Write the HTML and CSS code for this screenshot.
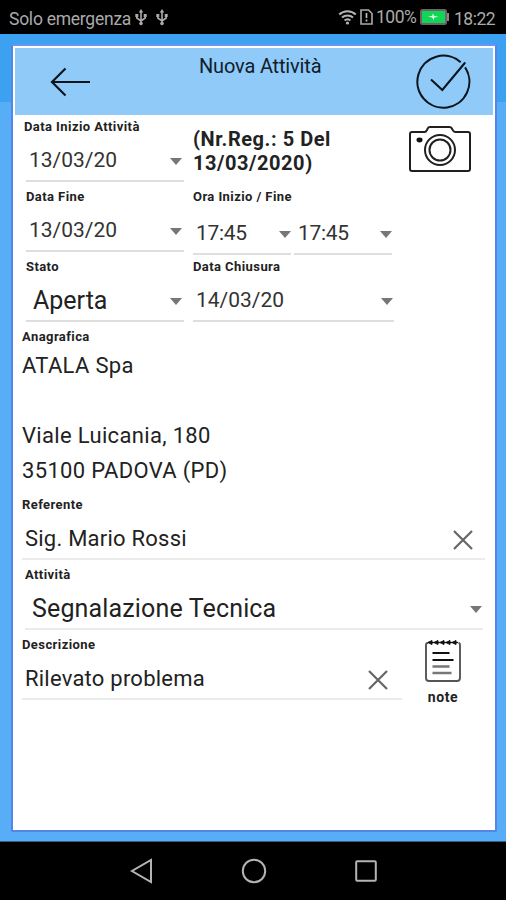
FILE: index.html
```html
<!DOCTYPE html>
<html lang="it">
<head>
<meta charset="utf-8">
<title>Nuova Attività</title>
<link rel="stylesheet" href="styles.css">
</head>
<body>
<div class="status">
  <span class="carrier">Solo emergenza</span>
  <svg class="usb" width="12" height="17" viewBox="0 0 12 17"><path d="M6 2v13M1.800 6v3L6 12l4.200-3V6" fill="none" stroke="#aaa" stroke-width="1.600"/><path d="M6 0l2.300 3.500H3.700zM.3 5h3v3h-3zM8.700 5h3v3h-3z" fill="#aaa"/><circle cx="6" cy="14.500" r="1.800" fill="#aaa"/></svg>
  <svg class="usb usb-second" width="12" height="17" viewBox="0 0 12 17"><path d="M6 2v13M1.800 6v3L6 12l4.200-3V6" fill="none" stroke="#aaa" stroke-width="1.600"/><path d="M6 0l2.300 3.500H3.700zM.3 5h3v3h-3zM8.700 5h3v3h-3z" fill="#aaa"/><circle cx="6" cy="14.500" r="1.800" fill="#aaa"/></svg>
  <svg class="wifi" width="19" height="16" viewBox="0 0 19 16"><path d="M1.200 5.500a12 12 0 0 1 16.600 0M4 8.600a8 8 0 0 1 11 0M6.600 11.500a4.300 4.300 0 0 1 5.800 0" fill="none" stroke="#b4b4b4" stroke-width="2"/><circle cx="9.500" cy="14" r="1.600" fill="#b4b4b4"/></svg>
  <svg class="sim" width="13" height="16" viewBox="0 0 13 16"><path d="M1 1h7.500L12 4.500V15H1z" fill="none" stroke="#aaa" stroke-width="1.600"/><path d="M6.500 4v5M6.500 10.500v2" stroke="#bbb" stroke-width="1.700"/></svg>
  <span class="percent">100%</span>
  <svg class="battery" width="29" height="16" viewBox="0 0 29 16"><rect x="1" y="1" width="25" height="14" rx="1.500" fill="#12d457" stroke="#6c6467" stroke-width="2"/><rect x="27" y="4" width="2" height="8" fill="#888"/><path d="M8 7.500l4.500-.8V4.500l2 2.500 4 .8-4.500.9V11l-2-2.500z" fill="#d9ffe3"/></svg>
  <span class="clock">18:22</span>
</div>
<main>
  <section class="card">
    <header>
      <svg class="back" width="42" height="30" viewBox="0 0 42 30"><path d="M40 15H2M15.500 1.500L2 15l13.500 13.500" fill="none" stroke="#0b151d" stroke-width="2.200"/></svg>
      <h1>Nuova Attività</h1>
      <svg class="confirm" width="56" height="56" viewBox="0 0 56 56"><path d="M44.700 8.300A26 26 0 1 0 49.100 13.400" fill="none" stroke="#0b151d" stroke-width="2.100"/><path d="M15 25.500l11.300 10.500L49.200 8.500" fill="none" stroke="#0b151d" stroke-width="2.100"/></svg>
    </header>
    <div class="body">
      <div class="row">
        <div class="field first start"><label>Data Inizio Attività</label><div class="value date">13/03/20<i class="arrow"></i></div></div>
        <p class="reg">(Nr.Reg.: 5 Del<br>13/03/2020)</p>
        <svg class="camera" width="62" height="46" viewBox="0 0 62 46"><path d="M3 6h12.500q1.500 0 2.500-2l.7-1.500Q19.200 1 21 1h19.500q1.500 0 2.200 1.200L44 4.500Q45 6 46.500 6H59q2 0 2 2v35q0 2-2 2H3q-2 0-2-2V8q0-2 2-2z" fill="none" stroke="#202020" stroke-width="2"/><circle cx="31" cy="24" r="15" fill="none" stroke="#202020" stroke-width="2"/><circle cx="31" cy="24" r="10.500" fill="none" stroke="#202020" stroke-width="2"/><ellipse cx="10.500" cy="14" rx="3" ry="2.400" fill="#111"/></svg>
      </div>
      <div class="row">
        <div class="field first"><label>Data Fine</label><div class="value date">13/03/20<i class="arrow"></i></div></div>
        <div class="field second"><label>Ora Inizio / Fine</label>
          <div class="times"><div class="value time">17:45<i class="arrow"></i></div><div class="value time">17:45<i class="arrow"></i></div></div>
        </div>
      </div>
      <div class="row">
        <div class="field first"><label>Stato</label><div class="value big">Aperta<i class="arrow"></i></div></div>
        <div class="field second"><label>Data Chiusura</label><div class="value date">14/03/20<i class="arrow"></i></div></div>
      </div>
      <div class="address">
        <label>Anagrafica</label>
        <p class="company">ATALA Spa</p>
        <p class="street">Viale Luicania, 180</p>
        <p>35100 PADOVA (PD)</p>
      </div>
      <div class="row">
        <div class="field contact"><label>Referente</label><div class="value text">Sig. Mario Rossi<svg class="clear" width="20" height="20" viewBox="0 0 20 20"><path d="M1 1l18 18M19 1L1 19" stroke="#666" stroke-width="2.200"/></svg></div></div>
      </div>
      <div class="row">
        <div class="field activity"><label>Attività</label><div class="value big">Segnalazione Tecnica<i class="arrow"></i></div></div>
      </div>
      <div class="row">
        <div class="field description"><label>Descrizione</label><div class="value text">Rilevato problema<svg class="clear" width="20" height="20" viewBox="0 0 20 20"><path d="M1 1l18 18M19 1L1 19" stroke="#666" stroke-width="2.200"/></svg></div></div>
        <div class="note">
          <svg width="36" height="44" viewBox="0 0 36 44"><path d="M3 4H2.500Q1 4 1 6v33q0 3 3 3h28q3 0 3-3V6q0-2-1.500-2" fill="none" stroke="#555" stroke-width="1.900"/><path d="M3 3.500h30" stroke="#111" stroke-width="1.300"/><path d="M3 3.500l4-2v4zM9 3.500l4-2v4zM15 3.500l4-2v4zM21 3.500l4-2v4zM27 3.500l4-2v4z" fill="#111" stroke="#111"/><path d="M7.500 14h17M7.500 21h21" stroke="#111" stroke-width="2.200"/><path d="M7.500 27.500h17M7.500 34h19" stroke="#777" stroke-width="2.400"/></svg>
          <span>note</span>
        </div>
      </div>
    </div>
  </section>
</main>
<nav>
  <svg width="23" height="26" viewBox="0 0 23 26"><path d="M21 2v22L2 13z" fill="none" stroke="#b4b4b4" stroke-width="2"/></svg>
  <svg width="26" height="26" viewBox="0 0 26 26"><circle cx="13" cy="13" r="11.200" fill="none" stroke="#b4b4b4" stroke-width="2"/></svg>
  <svg width="22" height="22" viewBox="0 0 22 22"><rect x="1.200" y="1.200" width="19.600" height="19.600" rx="1" fill="none" stroke="#b4b4b4" stroke-width="2"/></svg>
</nav>
</body>
</html>
```
FILE: styles.css
```css
* { box-sizing: border-box; }
body { margin: 0; width: 506px; height: 900px; overflow: hidden; display: flex; flex-direction: column; font-family: Roboto, sans-serif; color: #222; }
p, h1 { margin: 0; font-weight: 400; }
svg { display: block; flex: none; }

.status { height: 34px; background: #000; display: flex; align-items: center; color: #aaa; padding-left: 9px; white-space: nowrap; }
.carrier { width: 126px; font-size: 17.5px; letter-spacing: -0.25px; padding-top: 3px; }
.usb-second { margin-left: 9px; }
.wifi { margin-left: 170px; }
.sim { margin-left: 3px; }
.percent { margin-left: 3px; width: 43px; font-size: 17.5px; letter-spacing: -0.5px; }
.battery { margin-left: 1px; }
.clock { margin-left: 5px; font-size: 17.5px; letter-spacing: -0.5px; padding-top: 3px; }

main { height: 808px; padding: 10px 9px 10px 11px; background: linear-gradient(#3ca1f0 0 68px, #58adf7 68px); border-bottom: 1px solid #315f88; }
.card { height: 788px; background: #fff; border: 2px solid #5585e6; border-top-color: #6c96ee; border-radius: 2px; padding: 2px; }
header { height: 67px; background: #90caf9; display: flex; width: 478px; }
.back { margin: 19px 0 0 35px; }
h1 { margin: 6px 0 0 107px; width: 217px; font-size: 20px; line-height: 24px; letter-spacing: -0.17px; color: #10202b; white-space: nowrap; }
.confirm { margin-top: 6px; }

.body { padding: 4px 0 0 7px; }
.row { display: flex; height: 70px; }
label { display: block; height: 18px; line-height: 15px; font-size: 13px; font-weight: 700; letter-spacing: 0.42px; color: #222; white-space: nowrap; }
.value { display: flex; align-items: center; justify-content: space-between; height: 45px; padding-top: 3px; border-bottom: 2px solid #dedede; white-space: nowrap; }
.arrow { width: 0; height: 0; border: 6.5px solid transparent; border-top: 7px solid #777; border-bottom: 0; margin: 3px 1px 0 0; }
.date { font-size: 21px; padding-left: 3px; color: #333; }
.text { font-size: 22px; padding-left: 3px; letter-spacing: 0.23px; }
.big { font-size: 25px; padding-left: 7px; }
.time { width: 98px; height: 48px; padding-top: 5px; font-size: 21px; letter-spacing: -0.3px; padding-left: 3px; color: #333; }
.time + .time { padding-left: 4px; }
.time .arrow { margin-right: 0; }
.first { width: 158px; margin-left: 4px; margin-right: 9px; }
.first .arrow { margin-right: 2px; }
.start label { margin-left: -2px; }
.second { width: 201px; }
.times { display: flex; gap: 3px; }
.reg { width: 216px; padding-top: 8px; font-size: 20px; line-height: 24px; font-weight: 700; letter-spacing: 0.55px; }
.camera { margin-top: 7px; }
.address { height: 168px; }
.address p { font-size: 22px; height: 35px; line-height: 35px; letter-spacing: 0.33px; white-space: nowrap; }
.address .company { padding-top: 1px; }
.address .street { margin-top: 36px; }
.contact { width: 463px; }
.activity { width: 458px; margin-left: 3px; }
.activity .value { letter-spacing: 0.15px; }
.description { width: 380px; }
.text, .activity .value { border-bottom-color: #ebebeb; }
.clear { margin: 3px 12px 0 0; }
.description .clear { margin-right: 14px; }
.note { width: 40px; margin-left: 21px; padding-top: 2px; font-size: 14px; font-weight: 700; letter-spacing: 0.6px; text-align: center; }
.note svg { margin: 0 auto; }
.note span { display: block; line-height: 28px; }

nav { height: 58px; background: #000; display: flex; align-items: center; padding-left: 130px; }
nav svg + svg { margin-left: 88px; }
```
